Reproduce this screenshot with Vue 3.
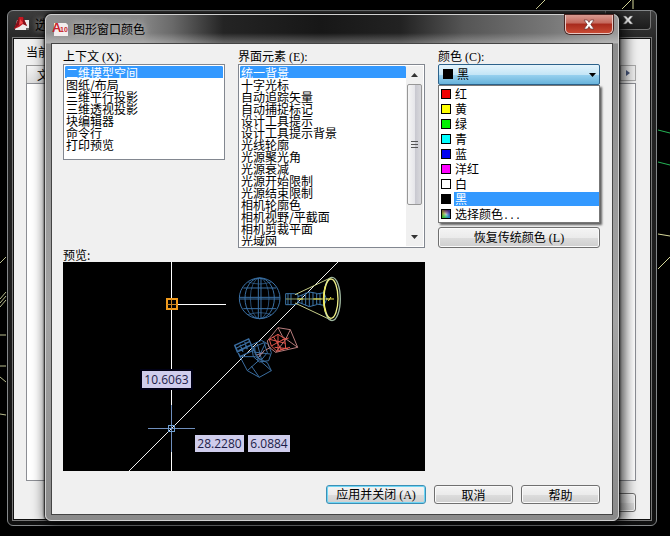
<script setup>
import { ref } from 'vue'

const contexts = ['二维模型空间', '图纸/布局', '三维平行投影', '三维透视投影', '块编辑器', '命令行', '打印预览']
const elements = [
  '统一背景', '十字光标', '自动追踪矢量', '自动捕捉标记', '设计工具提示', '设计工具提示背景',
  '光线轮廓', '光源聚光角', '光源衰减', '光源开始限制', '光源结束限制', '相机轮廓色',
  '相机视野/平截面', '相机剪裁平面', '光域网'
]
const colors = [
  { name: '红', value: '#ee0000' },
  { name: '黄', value: '#ffff00' },
  { name: '绿', value: '#00ee00' },
  { name: '青', value: '#00ffff' },
  { name: '蓝', value: '#0000ee' },
  { name: '洋红', value: '#ff00ff' },
  { name: '白', value: '#ffffff' },
  { name: '黑', value: '#000000' }
]
const context = ref(contexts[0])
const element = ref(elements[0])
const color = ref('黑')
</script>

<template>
  <div class="desktop">
    <svg class="lines left-lines" width="7" height="536" viewBox="0 0 7 536" fill="none" stroke="#b9bd8e">
      <path d="M0 263l6-6M0 299l6-7M0 303l6-7M0 307l6-7M0 335h6M0 366h6M0 377l6 5M0 414l6 1" />
    </svg>
    <svg class="lines right-lines" width="134" height="270" viewBox="0 0 134 270" fill="none" stroke="#d6d89a">
      <path d="M0 9L9 0M86 9L95 0M97 9V0M122 234l12 2M122 269l12-12" />
      <path d="M122 130l12 3M122 162l12 3" stroke="#25b355" />
    </svg>

    <section class="back-window">
      <header class="back-title">
        <svg class="app-icon" width="16" height="16" viewBox="0 0 16 16">
          <path d="M3 4h12v10H1z" fill="#eceaea" />
          <path d="M5 1l4 0 4 9-4-2-4 3-5 2z" fill="#c41821" />
          <path d="M5 1l1 7-6 5zM9 1l4 9-4-2z" fill="#85101a" />
          <path d="M6 3l3 4-4 2z" fill="#ef4b4b" />
          <path d="M12 12h3v2h-3z" fill="#666" />
        </svg>
        <span>选</span>
        <button class="back-close" aria-label="关闭">
          <svg width="12" height="10" viewBox="0 0 12 10"><path d="M1 1h3l2 2.300 2-2.300h3L7.700 5 11 9H8L6 6.700 4 9H1l3.300-4z" fill="#fff" stroke="#555" stroke-width=".6" /></svg>
        </button>
      </header>
      <div class="back-body">
        <div class="profile">当前</div>
        <div class="tabs">
          <button class="tab">文</button>
          <button class="tab-next" aria-label="下一页"><svg width="4" height="6" viewBox="0 0 4 6"><path d="M0 0l4 3-4 3z" fill="#4b5a80" /></svg></button>
        </div>
        <div class="tab-panel"></div>
        <div class="back-footer"><button class="btn" aria-label="帮助"></button></div>
      </div>
    </section>

    <section class="dialog" aria-label="图形窗口颜色">
      <header class="title">
        <svg class="title-icon" width="17" height="17" viewBox="0 0 17 17">
          <path d="M2 2h12l2 2v11H2z" fill="#f3eeee" />
          <text x="0" y="11" font-size="13" class="logo-a">A</text>
          <text x="8" y="11" font-size="7" class="logo-n">10</text>
        </svg>
        <h1>图形窗口颜色</h1>
        <button class="close" aria-label="关闭">
          <svg width="12" height="11" viewBox="0 0 12 11"><path d="M1 1h3.400L6 3.400 7.600 1H11L7.800 5.500 11 10H7.600L6 7.600 4.400 10H1l3.200-4.500z" fill="#fff" stroke="#6b3333" stroke-width=".7" /></svg>
        </button>
      </header>

      <div class="body">
        <div class="grid">
          <div class="field">
            <label for="context">上下文<span class="key">(X):</span></label>
            <div class="listbox short">
              <select id="context" v-model="context" size="7">
                <option v-for="c in contexts" :key="c" :value="c">{{ c }}</option>
              </select>
            </div>
          </div>

          <div class="field">
            <label for="element">界面元素<span class="key">(E):</span></label>
            <div class="listbox tall">
              <select id="element" v-model="element" size="15">
                <option v-for="e in elements" :key="e" :value="e">{{ e }}</option>
              </select>
              <div class="scrollbar" aria-hidden="true">
                <svg width="7" height="4" viewBox="0 0 7 4"><path d="M0 4l3.500-4L7 4z" fill="#333" /></svg>
                <div class="thumb"><i></i><i></i><i></i></div>
                <svg width="7" height="4" viewBox="0 0 7 4"><path d="M0 0l3.500 4L7 0z" fill="#333" /></svg>
              </div>
            </div>
          </div>

          <div class="field">
            <label for="color">颜色<span class="key">(C):</span></label>
            <div class="combo">
              <select id="color" v-model="color">
                <option v-for="c in colors" :key="c.name" :value="c.name">{{ c.name }}</option>
              </select>
              <i class="swatch current"></i>
              <svg class="arrow" width="7" height="4" viewBox="0 0 7 4"><path d="M0 0h7L3.500 4z" fill="#000" /></svg>
              <ul class="menu" role="listbox" aria-label="颜色">
                <li
                  v-for="c in colors"
                  :key="c.name"
                  role="option"
                  :aria-selected="c.name === color"
                  :class="{ on: c.name === color }"
                  @click="color = c.name"
                >
                  <i class="swatch" :style="{ background: c.value }"></i><span>{{ c.name }}</span>
                </li>
                <li role="option"><i class="swatch spectrum"></i><span>选择颜色<span class="dots">...</span></span></li>
              </ul>
            </div>
            <button class="btn restore">恢复传统颜色<span class="key">(L)</span></button>
          </div>

          <div class="preview">
            <div class="preview-label">预览:</div>
            <svg class="canvas" viewBox="0 0 362 209" fill="none">
              <rect width="362" height="209" fill="#000" />
              <path d="M66 209L275 0" stroke="#eee" />
              <path d="M108.500 0V209M108 42.500H163" stroke="#fff" />
              <rect x="104" y="37" width="10" height="10" stroke="#f09a1c" stroke-width="2" />
              <path d="M104 42.500h10M108.500 37v10" stroke="#c98425" />
              <path d="M85 166.500h47M108.500 143v47" stroke="#6f8fbd" />
              <rect x="105.500" y="163.500" width="6" height="6" stroke="#6f9fd0" />

              <g transform="translate(157 -2) scale(.3333)" stroke="#3a70a5" stroke-width="3">
                <circle cx="119" cy="115" r="61" />
                <ellipse cx="119" cy="115" rx="44" ry="61" />
                <ellipse cx="119" cy="115" rx="28" ry="61" stroke-width="2" />
                <path d="M115 54V176M123 54V176M58 112H180M58 117H180M70 84H168M70 146H168" />
                <path d="M84 66Q119 78 154 66M84 164Q119 152 154 164" stroke-width="2" />
              </g>

              <g transform="translate(157 -2) scale(.3333)" stroke-width="3">
                <path d="M197 101H222L234 104V131L222 134H197zM204 101V134M213 101V134M234 110L268 96V140L234 126M246 105V131M257 98V136M268 96L290 100V134L268 140M279 97V138M290 102L312 98V136L290 132M300 99V135M312 98L320 118 312 136" stroke="#3c75a8" />
                <path d="M197 117H325" stroke="#8fa06a" />
                <path d="M225 104L335 52M225 129L335 181" stroke="#c8cf8a" />
                <ellipse cx="336" cy="117" rx="25" ry="65" stroke="#9fb7a0" stroke-width="4" />
                <ellipse cx="333" cy="116" rx="21" ry="59" stroke="#eff08a" stroke-width="4" />
                <path d="M316 78Q304 116 316 156M318 117h24M325 123l8-12M232 117h18M280 117h25" stroke="#f2e84a" />
              </g>

              <g transform="translate(157 -2) scale(.3333)" stroke="#3a6da0" stroke-width="3">
                <path d="M44 256L86 237 94 255 52 276zM44 256L60 290 102 270 94 255M50 264L88 245M55 272L92 255M60 254L69 275M74 247L82 268" stroke-width="4" />
                <path d="M60 290L82 332 118 352 154 332 142 308 106 290zM102 270L118 300 82 332M118 300L154 332M94 318L118 352" />
                <path d="M94 255L124 241 145 253 154 278 146 302 118 306 100 290zM104 260L132 248 142 278 124 300 106 285zM100 276L150 282M112 252L126 303M136 250L112 300" stroke-width="3" />
                <path d="M110 285L130 278M116 292L134 270" stroke="#a58391" />
              </g>
              <g transform="translate(157 -2) scale(.3333)" stroke-width="3">
                <path d="M142 243L174 203 211 209 233 262 167 277 147 261zM174 203L188 230 233 262M211 209L196 240 167 277" stroke="#b67b7b" />
                <path d="M148 238L174 223 194 236 197 264 171 274 154 258zM160 230L184 268M174 223V273M148 238L197 250M154 258L194 236M180 270L210 262M187 240L206 234M164 262L204 266" stroke="#e2564c" />
                <path d="M137 270L152 262" stroke="#c08080" />
              </g>

              <g class="tips">
                <rect x="77" y="107" width="53" height="21" fill="#000014" />
                <rect x="79" y="109" width="49" height="17" />
                <text x="103.500" y="122">10.6063</text>
                <rect x="132" y="173" width="49" height="17" />
                <text x="156.500" y="186">28.2280</text>
                <rect x="185" y="173" width="42" height="17" />
                <text x="206" y="186">6.0884</text>
              </g>
            </svg>
          </div>
        </div>

        <footer class="actions">
          <button class="btn primary">应用并关闭<span class="key">(A)</span></button>
          <button class="btn">取消</button>
          <button class="btn">帮助</button>
        </footer>
      </div>
    </section>
  </div>
</template>

<style>
body {
  margin: 0;
  background: #000;
}
</style>

<style scoped>
.desktop {
  position: relative;
  min-height: 100vh;
  overflow: hidden;
  background: #000;
  color: #000;
  font: 12px/13px "Noto Sans CJK SC", sans-serif;
}
button,
select {
  font: inherit;
  color: inherit;
}
* {
  box-sizing: border-box;
}
.key {
  margin-left: 3px;
  font-family: "Liberation Serif", serif;
}
.dots {
  font: 10px/12px "Liberation Mono", monospace;
}
.lines {
  position: absolute;
  top: 0;
}
.left-lines {
  left: 0;
}
.right-lines {
  right: 0;
}

/* window behind */
.back-window {
  position: absolute;
  inset: 10px 13px 10px 7px;
  display: flex;
  flex-direction: column;
  padding: 0 5px 5px;
  border: 1px solid #85888a;
  border-radius: 6px;
  background: linear-gradient(#3c3c3c, #262626 30px, #202020 35%, #101010);
}
.back-title {
  display: flex;
  align-items: center;
  height: 27px;
  padding: 0 0 2px 1px;
  gap: 5px;
  font-size: 13px;
  flex: none;
}
.back-title span {
  flex: 1;
  text-shadow: 0 0 4px #999, 0 0 8px #888;
}
.back-close {
  align-self: flex-start;
  width: 46px;
  height: 19px;
  padding: 0;
  border: 1px solid #777;
  border-top: 0;
  border-radius: 0 0 4px 4px;
  background: linear-gradient(#333, #1c1c1c);
}
.back-body {
  flex: 1;
  display: flex;
  flex-direction: column;
  padding: 6px 14px 7px 12px;
  border: 1px solid #111;
  outline: 1px solid #777;
  background: #f0f0f0;
}
.tabs {
  display: flex;
  justify-content: space-between;
  margin-top: 7px;
}
.tab {
  height: 18px;
  padding: 0 10px;
  border: 1px solid #999;
  border-bottom: 0;
  background: linear-gradient(#f4f4f4, #ddd);
}
.tab-next {
  display: grid;
  place-items: center;
  width: 16px;
  height: 16px;
  padding: 0;
  border: 1px solid #aaa;
  background: #eee;
}
.tab-panel {
  flex: 1;
  border: 1px solid #8c8e94;
  background: #fff;
}
.back-footer {
  display: flex;
  justify-content: flex-end;
  margin-top: 12px;
}

/* front dialog */
.dialog {
  position: absolute;
  left: 45px;
  right: 51px;
  top: 14px;
  padding: 0 5px 5px;
  border: 1px solid #d0d0d0;
  border-radius: 6px;
  background:
    linear-gradient(transparent 18px, rgba(255, 255, 255, .3) 28px, transparent 29px),
    linear-gradient(90deg, #909090, #858585 17%, #6a6a6a 22%, #242424 31%, #171717 48%, #222 62%, #555 73%, #777 88%, #999) top / 100% 28px no-repeat,
    linear-gradient(#8a8a8a, #a4a4a4 60%, #8a8a8a);
  box-shadow: 0 0 2px 1px #111, 3px 2px 14px 2px rgba(0, 0, 0, .8);
}
.title {
  display: flex;
  align-items: center;
  height: 28px;
  padding-left: 1px;
  gap: 4px;
}
.title h1 {
  flex: 1;
  margin: 0;
  padding-bottom: 2px;
  font-size: 12px;
  font-weight: 400;
  text-shadow: 0 0 6px #bbb, 0 0 8px #bbb;
}
.logo-a,
.logo-n {
  font-family: "Liberation Sans", sans-serif;
  font-weight: 700;
  fill: #c8242b;
}
.close {
  align-self: flex-start;
  display: grid;
  place-items: center;
  width: 48px;
  height: 19px;
  padding: 0;
  border: 1px solid #e8c8c4;
  border-top: 0;
  border-radius: 0 0 5px 5px;
  background: linear-gradient(#d89a90, #c4685c 45%, #a82a1c 50%, #c84a34);
  box-shadow: 0 0 0 1px #4a2522;
}
.back-close svg,
.close svg {
  display: block;
  margin: 0 auto;
}
.body {
  padding: 5px 12px 10px 11px;
  border: 1px solid #444;
  background: #f0f0f0;
}
.grid {
  display: grid;
  grid-template-columns: 162fr 187fr 162fr;
  column-gap: 13px;
}
.field {
  display: flex;
  flex-direction: column;
  min-width: 0;
}
.field label {
  height: 13px;
  margin-bottom: 2px;
}
.listbox {
  display: flex;
  padding: 1px;
  border: 1px solid #828790;
  background: #fff;
}
.short {
  height: 96px;
}
.tall {
  height: 184px;
}
.listbox select {
  flex: 1;
  min-width: 0;
  height: 100%;
  padding: 0;
  border: 0;
  outline: 0;
  background: #fff;
  overflow: hidden;
  scrollbar-width: none;
}
.listbox option {
  display: flex;
  align-items: center;
  height: 12px;
  min-height: 12px;
  padding: 0 0 0 1px;
  color: #000;
}
.listbox option:checked {
  background: #3399ff linear-gradient(#3399ff, #3399ff);
  color: #fff;
}
.scrollbar {
  display: flex;
  flex-direction: column;
  align-items: center;
  justify-content: space-between;
  width: 17px;
  padding: 7px 1px;
  background: #f0f0f0;
}
.thumb {
  display: flex;
  flex-direction: column;
  justify-content: center;
  align-items: center;
  gap: 2px;
  width: 15px;
  height: 121px;
  margin-bottom: 24px;
  border: 1px solid #979797;
  border-radius: 2px;
  background: linear-gradient(90deg, #f5f5f5, #e6e6ea 50%, #c8c8d0 55%, #d8d8dc);
}
.thumb i {
  width: 7px;
  height: 1px;
  background: #555;
}
.combo {
  position: relative;
}
.combo select {
  display: block;
  appearance: none;
  width: 100%;
  height: 21px;
  padding: 0 20px 2px 18px;
  border: 1px solid #2c628b;
  border-radius: 2px;
  outline: 0;
  background: linear-gradient(#e5f4fc, #c4e5f6 50%, #98d1ef 52%, #68b3db);
}
.swatch {
  flex: none;
  width: 10px;
  height: 10px;
  border: 1px solid #000;
}
.current {
  position: absolute;
  left: 5px;
  top: 5px;
  background: #000;
}
.arrow {
  position: absolute;
  right: 4px;
  top: 9px;
}
.menu {
  position: absolute;
  left: 0;
  right: 0;
  top: 21px;
  margin: 0;
  padding: 0 0 1px;
  list-style: none;
  border: 1px solid #777;
  background: #fff;
  box-shadow: 2px 2px 2px rgba(0, 0, 0, .6);
}
.menu li {
  display: flex;
  align-items: center;
  gap: 3px;
  height: 15px;
  padding-left: 2px;
}
.menu li > span {
  flex: 1;
  height: 14px;
  padding-left: 1px;
  line-height: 14px;
}
.menu .on > span {
  background: #3399ff;
  color: #fff;
}
.spectrum {
  background:
    radial-gradient(circle, rgba(255, 255, 255, .6), transparent 70%),
    conic-gradient(#525, #339, #28b, #3b3, #882, #525);
}
.btn {
  min-width: 79px;
  height: 19px;
  padding: 0;
  border: 1px solid #707070;
  border-radius: 3px;
  background: linear-gradient(#f4f4f4, #ebebeb 50%, #dddddd 51%, #cfcfcf);
  line-height: 15px;
  box-shadow: inset 0 0 0 1px #fafafa;
}
.restore {
  height: 21px;
  margin-top: auto;
}
.primary {
  min-width: 100px;
  border-color: #3c8fb5;
  box-shadow: inset 0 0 0 1px #6fd6f5;
}
.preview {
  grid-column: 1 / 3;
}
.preview-label {
  margin-bottom: 1px;
}
.canvas {
  display: block;
  width: 100%;
}
.tips rect {
  fill: #cfcdec;
}
.tips rect:first-child {
  fill: #000014;
}
.tips text {
  font: 12px "Open Sans", sans-serif;
  fill: #1c1c48;
  text-anchor: middle;
}
.actions {
  display: flex;
  justify-content: flex-end;
  gap: 8px;
  margin-top: 14px;
}
</style>
